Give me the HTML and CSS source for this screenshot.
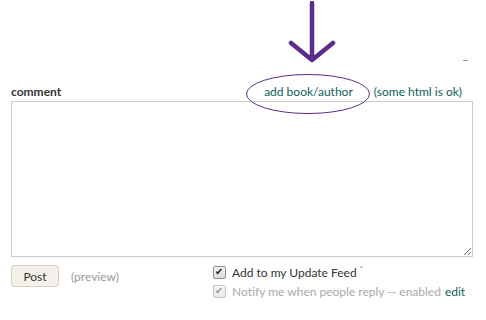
FILE: index.html
```html
<!DOCTYPE html>
<html>
<head>
    <title>comment</title>
    <link rel="stylesheet" href="styles.css">
</head>
<body>
    <div class="page">
        <div class="top">
            <svg class="arrow" width="50" height="64" viewBox="0 0 50 64">
                <path d="M24 2 L24 58 M3 42 L24 59 L45 42" fill="none" stroke="#5c2c8a" stroke-width="4.5" stroke-linecap="round" stroke-linejoin="round"/>
            </svg>
            <span class="dash"></span>
        </div>

        <div class="head">
            <label class="title" for="body">comment</label>
            <div class="links">
                <a href="#" class="addBook">add book/author
                    <svg class="ring" width="126" height="42" viewBox="0 0 126 42">
                        <ellipse cx="63" cy="21" rx="61.5" ry="19.5" fill="none" stroke="#5c2c8a" stroke-width="1"/>
                    </svg>
                </a>
                <a href="#" class="htmlOk">(some html is ok)</a>
            </div>
        </div>

        <textarea id="body" class="body"></textarea>

        <div class="foot">
            <div class="actions">
                <button type="button" class="post">Post</button>
                <a href="#" class="preview">(preview)</a>
            </div>
            <div class="opts">
                <label class="opt"><input type="checkbox" checked> Add to my Update Feed <sup>*</sup></label>
                <label class="opt off"><input type="checkbox" checked disabled> Notify me when people reply -- enabled <a href="#">edit</a></label>
            </div>
        </div>
    </div>
</body>
</html>
```

FILE: styles.css
```css
body {
    margin: 0;
    background: #fff;
    font-family: Lato, "Open Sans", sans-serif;
    font-size: 12px;
    color: #333;
}

.page {
    width: 462px;
    padding: 0 0 0 11px;
}

.top {
    position: relative;
    height: 84px;
}

.arrow {
    position: absolute;
    left: 277px;
    top: 1px;
}

.dash {
    position: absolute;
    left: 452px;
    top: 60px;
    width: 5px;
    height: 1px;
    background: #999;
}

.head {
    display: flex;
    justify-content: space-between;
    align-items: flex-end;
    height: 16px;
    line-height: 16px;
}

.title {
    font-weight: bold;
    color: #333;
}

.links {
    display: flex;
    gap: 21px;
    margin-right: 11px;
}

a {
    color: #0b625c;
    text-decoration: none;
}

.addBook {
    position: relative;
}

.ring {
    position: absolute;
    left: -19px;
    top: -11px;
}

.body {
    display: block;
    box-sizing: border-box;
    width: 462px;
    height: 156px;
    margin: 1px 0 0;
    border: 1px solid #ccc;
    resize: vertical;
}

.foot {
    display: flex;
    margin-top: 8px;
}

.actions {
    display: flex;
    align-items: center;
    height: 22px;
    width: 202px;
}

.post {
    width: 48px;
    height: 22px;
    padding: 0;
    font-family: Lato, "Open Sans", sans-serif;
    font-size: 12px;
    color: #333;
    background: #f4f1ea;
    border: 1px solid #d6d0c4;
    border-radius: 3px;
}

.preview {
    margin-left: 12px;
    color: #999;
}

.opts {
    display: flex;
    flex-direction: column;
    margin-top: -2px;
}

.opt {
    display: flex;
    align-items: center;
    height: 19px;
    color: #333;
}

.opt input {
    appearance: none;
    -webkit-appearance: none;
    position: relative;
    box-sizing: border-box;
    width: 13px;
    height: 13px;
    margin: 0 6px 0 0;
    border: 1px solid #8f8f8f;
    border-radius: 2px;
    background: linear-gradient(#f4f4f4, #dcdcdc);
}

.opt input:checked::after {
    content: "\2714";
    position: absolute;
    left: 1px;
    top: -2px;
    font-family: "DejaVu Sans", sans-serif;
    font-size: 10px;
    line-height: 14px;
    color: #222;
}

.opt input:disabled {
    border-color: #c4c4c4;
    background: linear-gradient(#f7f7f7, #e8e8e8);
}

.opt input:disabled::after {
    color: #999;
}

.opt sup {
    font-size: 8px;
    color: #999;
    margin-left: 3px;
    align-self: flex-start;
    line-height: 12px;
}

.off {
    color: #aaa;
}

.off a {
    margin-left: 4px;
}
```
